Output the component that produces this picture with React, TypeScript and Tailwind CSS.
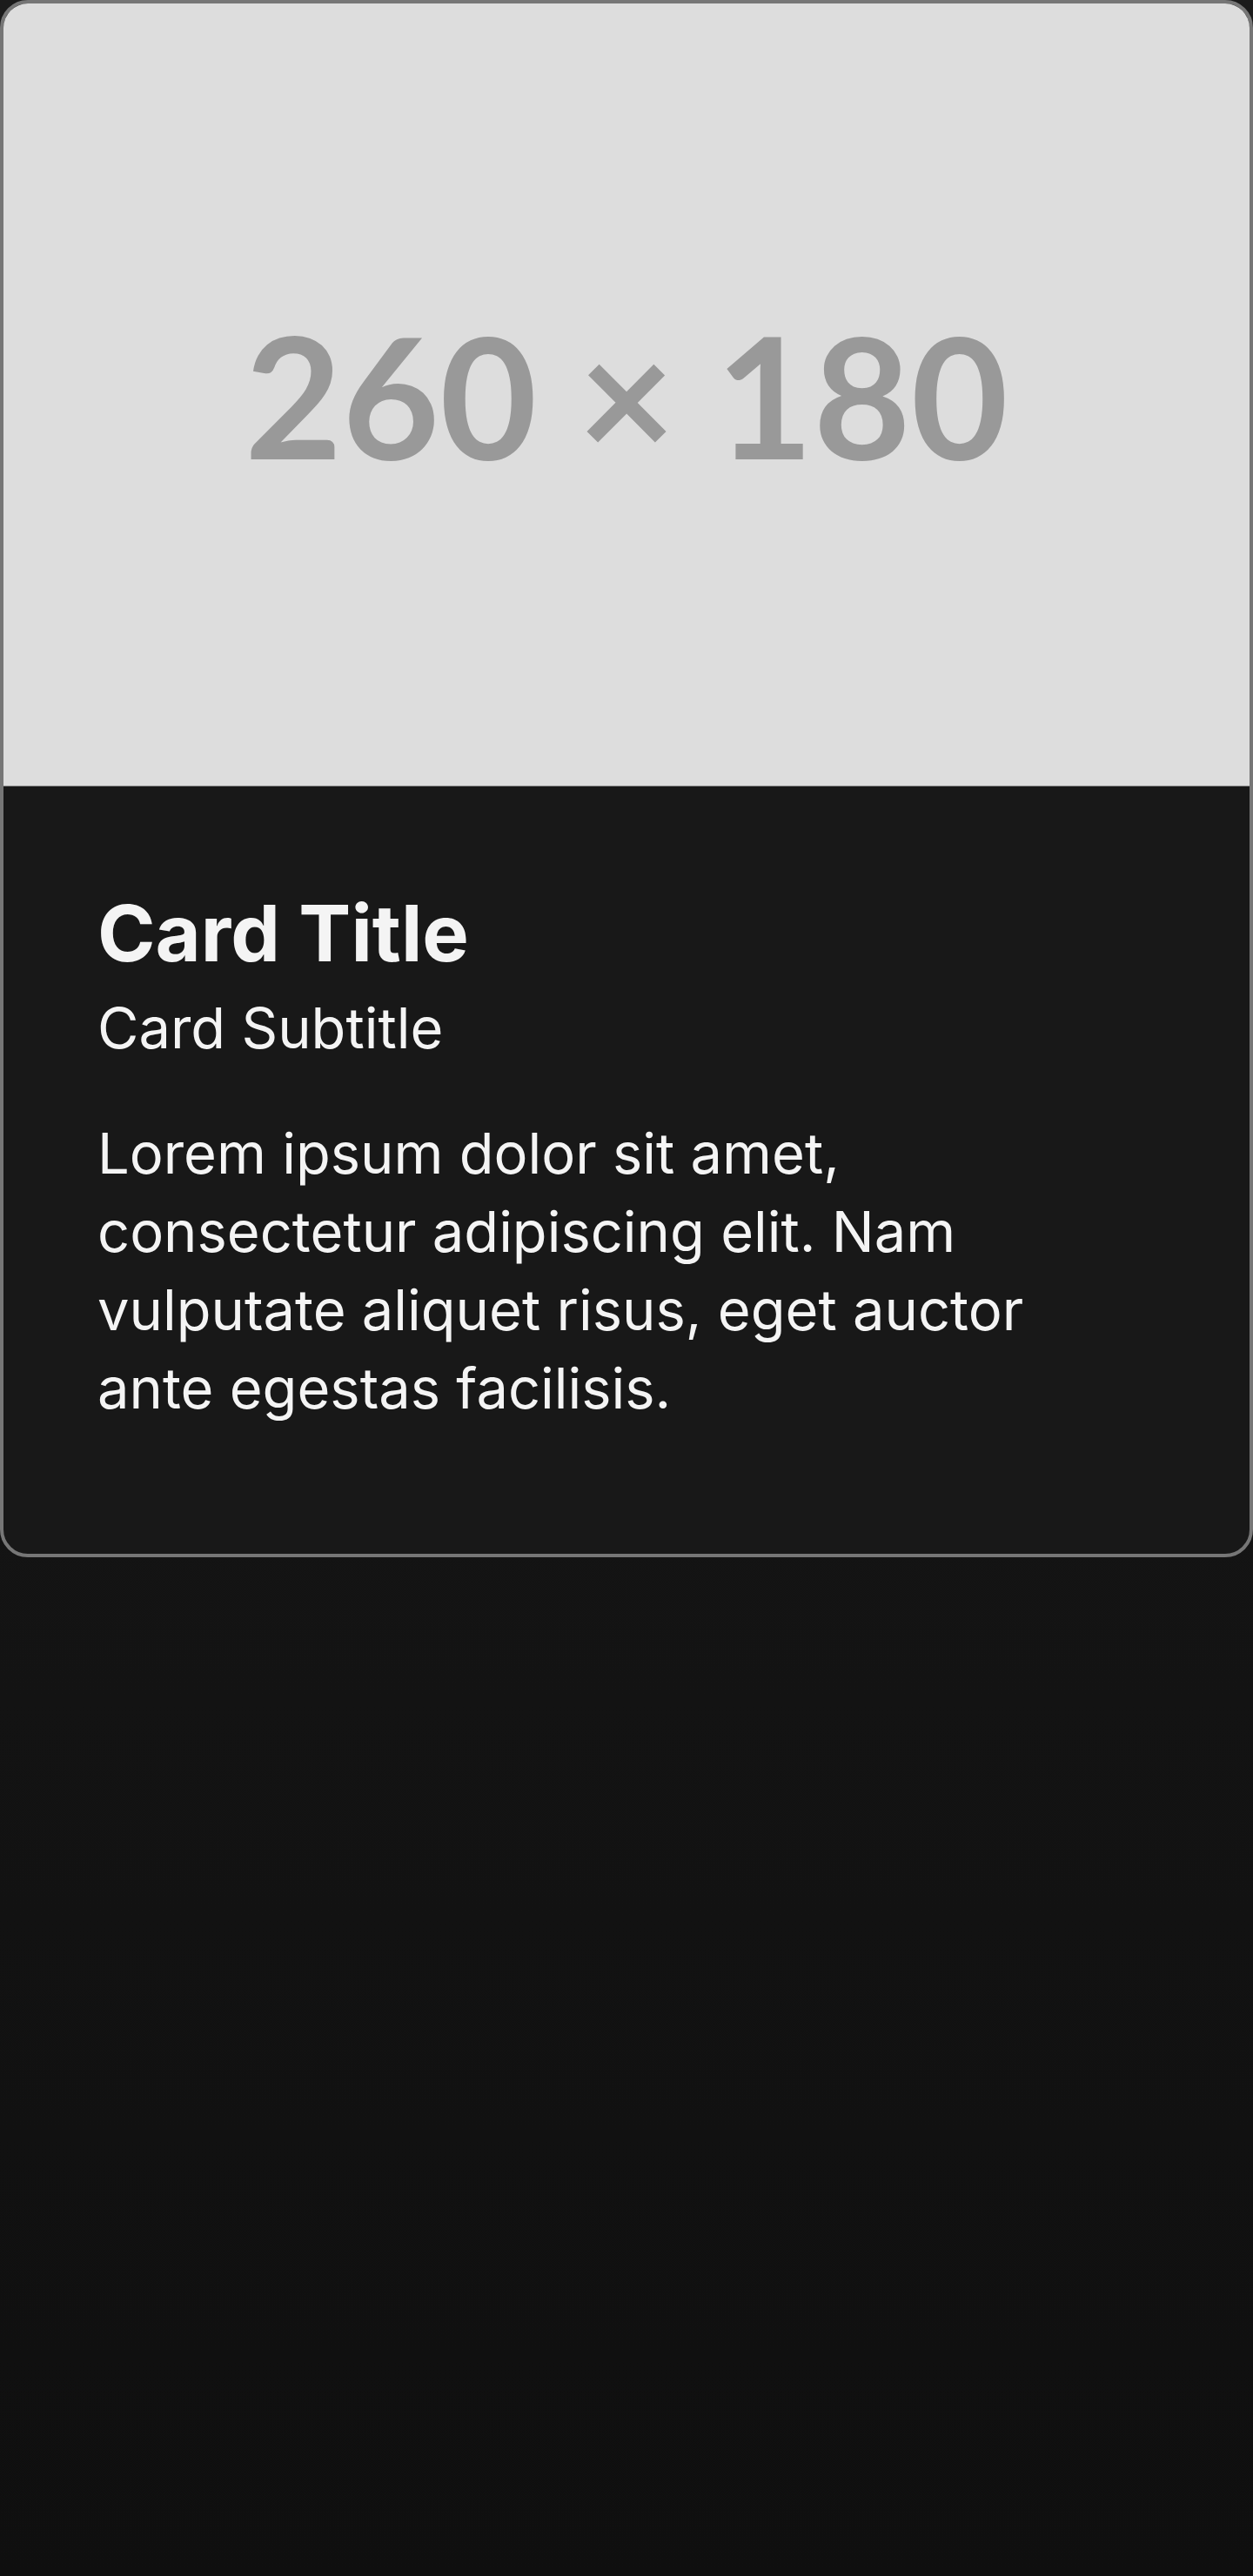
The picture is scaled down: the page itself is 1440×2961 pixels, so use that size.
import React from "react";

const Card = () => {
  return (
    <div className="w-full border-4 border-[#767676] rounded-[32px] overflow-hidden bg-[#181818]">
      <div className="h-[900px] bg-[#dddddd] border-b border-[#8a8a8a] flex items-center justify-center">
        <span className="font-['Lato',sans-serif] font-bold text-[193px] leading-none text-[#999999]">
          260 × 180
        </span>
      </div>
      <div className="px-[108px] pt-[114px] pb-[145px] font-['Inter',sans-serif] text-[#f4f4f4]">
        <h2 className="text-[90px] leading-[110px] font-bold">Card Title</h2>
        <p className="text-[65px] leading-[80px] mt-[14px]">Card Subtitle</p>
        <p className="text-[65px] leading-[90px] mt-[59px] max-w-[1150px]">
          Lorem ipsum dolor sit amet, consectetur adipiscing elit. Nam vulputate aliquet risus, eget
          auctor ante egestas facilisis.
        </p>
      </div>
    </div>
  );
};

export default function App() {
  return (
    <div className="min-h-[2961px] bg-linear-to-b from-[#1b1b1b] to-[#0f0f0f]">
      <Card />
    </div>
  );
}
